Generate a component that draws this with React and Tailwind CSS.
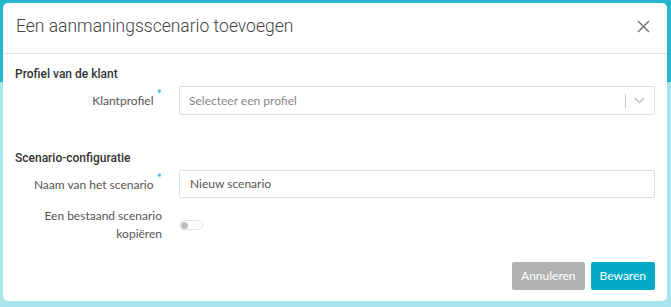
import React, { useState } from 'react';

function Field({ label, required, children }) {
  return (
    <div className="flex items-center">
      <div className="w-[164px] shrink-0 pr-[17px] text-right text-[12px] leading-[18px] text-[#555]">
        <span>{label}</span>
        {required && <span className="relative -top-[6px] ml-[3px] text-[13px] text-[#19b3cf]">*</span>}
      </div>
      <div className="flex-1">{children}</div>
    </div>
  );
}

function App() {
  const [copy, setCopy] = useState(false);

  return (
    <div className="relative h-[307px] w-[671px] overflow-hidden bg-[#a9e3ed] font-['Lato',sans-serif]">
      <div className="absolute inset-x-0 top-0 h-[82px] bg-[#25b6ce]" />
      <div className="absolute left-[3px] top-[3px] flex h-[298px] w-[664px] flex-col rounded-[5px] bg-white">
        <div className="flex h-[51px] items-center justify-between border-b border-[#e2e2e6] pb-[3px] pl-[13px] pr-[14px]">
          <h1 className="font-['Roboto',sans-serif] text-[17.5px] font-light text-[#444]">
            Een aanmaningsscenario toevoegen
          </h1>
          <button className="flex h-[20px] w-[20px] items-center justify-center text-[#777]">
            <svg width="13" height="13" viewBox="0 0 13 13" fill="none" stroke="currentColor" strokeWidth="1.5">
              <path d="M1 1L12 12M12 1L1 12" />
            </svg>
          </button>
        </div>

        <div className="flex flex-1 flex-col px-[12px] pt-[11px]">
          <h2 className="font-['Roboto',sans-serif] text-[12px] font-medium text-[#333]">Profiel van de klant</h2>
          <div className="mt-[3px]">
            <Field label="Klantprofiel" required>
              <div className="flex h-[29px] items-center rounded-[2px] border border-[#dedede] pl-[9px] pr-[6px]">
                <span className="flex-1 text-[12px] text-[#888]">Selecteer een profiel</span>
                <span className="h-[14px] w-px bg-[#ccc]" />
                <svg className="ml-[8px] mr-[3px]" width="11" height="7" viewBox="0 0 11 7" fill="none" stroke="#c4c4c4" strokeWidth="1.6">
                  <path d="M1 1L5.5 5.5L10 1" />
                </svg>
              </div>
            </Field>
          </div>

          <h2 className="mt-[34px] font-['Roboto',sans-serif] text-[12px] font-medium text-[#333]">Scenario-configuratie</h2>
          <div className="mt-[3px]">
            <Field label="Naam van het scenario" required>
              <div className="flex h-[28px] items-center rounded-[2px] border border-[#dedede] pl-[10px]">
                <span className="text-[12px] text-[#555]">Nieuw scenario</span>
              </div>
            </Field>
          </div>
          <div className="mt-[9px]">
            <Field label={<>Een bestaand scenario<br />kopiëren</>}>
              <button
                onClick={() => setCopy(!copy)}
                className="flex h-[10px] w-[24px] items-center rounded-full border border-[#e4e4e4] bg-white px-[1px]"
              >
                <span className="h-[7px] w-[7px] rounded-full bg-[#bdbdbd]" />
              </button>
            </Field>
          </div>

          <div className="mt-auto flex justify-end gap-[6px] pb-[11px]">
            <button className="h-[28px] rounded-[2px] bg-[#b1b1b1] px-[9px] text-[12px] text-white">Annuleren</button>
            <button className="h-[28px] rounded-[2px] bg-[#03abc9] px-[9px] text-[12px] text-white">Bewaren</button>
          </div>
        </div>
      </div>
    </div>
  );
}

export default App;
